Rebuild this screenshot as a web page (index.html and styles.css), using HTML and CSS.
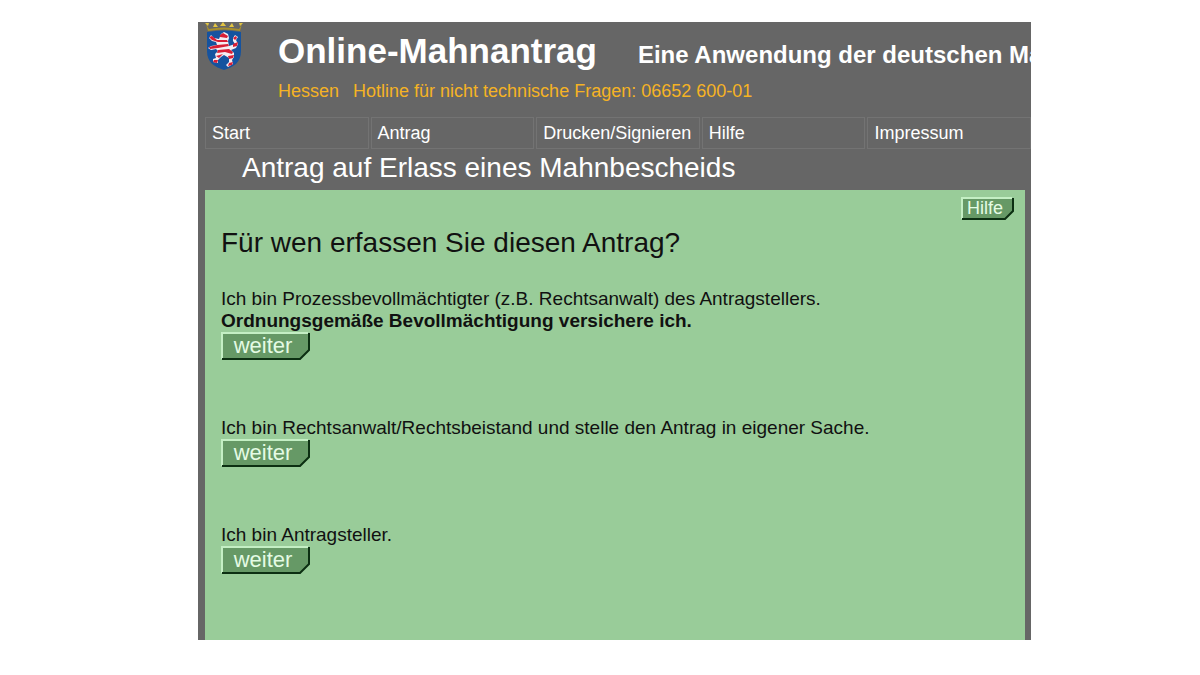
FILE: index.html
```html
<!DOCTYPE html>
<html lang="de">
<head>
  <meta charset="UTF-8">
  <title>Online-Mahnantrag</title>
  <link rel="stylesheet" href="styles.css">
</head>
<body>

<div class="window">
  <header class="kopf">
    <svg class="wappen" viewBox="0 0 38 48" role="img" aria-label="Landeswappen Hessen">
      <path d="M1 2 L4 7 Q19 4 34 7 L37 2 L35 9 Q19 6 3 9 Z" fill="#a8902c"/>
      <path d="M8 5 L10 1 L13 5 Z M15 4 L18 0 L21 4 Z M24 5 L27 1 L29 5 Z M0 1 H4 L3 4 Z M34 1 H38 L35 4 Z" fill="#e3c541"/>
      <path d="M2 10 Q19 7 36 10 V29 C36 41 28 45 19 48 C10 45 2 41 2 29 Z" fill="#15539f"/>
      <!-- Löwe -->
      <path d="M16 12 L19 10 L23 12 L24 16 L23 19 L24 24 L27 23 L30 22 L28 19 L28 16 L30 13 L33 15 L31 18 L33 22 L31 26 L26 28 L29 31 L29 35 L27 38 L28 42 L23 45 L21 43 L24 40 L24 36 L19 33 L16 35 L13 38 L13 41 L8 40 L8 37 L11 36 L10 32 L13 29 L11 27 L6 28 L3 26 L6 24 L12 23 L11 20 L7 19 L4 16 L6 13 L9 16 L14 17 Z" fill="#f4edf2"/>
      <path d="M15 13 L18 11 L23 14 L22 16 L15 15 Z M4 15 L7 14 L12 18 L22 18 L23 20 L13 20 L7 18 Z M4 25 L12 23 L23 22 L24 24 L13 26 L5 27 Z M13 28 L24 27 L28 30 L27 32 L20 30 L12 31 Z M11 34 L18 32 L14 36 Z M9 38 L13 38 L12 41 L8 40 Z M23 34 L29 33 L28 36 L24 37 Z M24 41 L28 40 L27 43 L23 44 Z M28 22 L33 20 L32 24 L28 25 Z M28 16 L31 14 L32 16 L30 18 Z" fill="#d81e35"/>
    </svg>
    <div class="titel">
      <div class="titel-zeile">
        <h1>Online-Mahnantrag</h1>
        <span class="untertitel">Eine Anwendung der deutschen Mahngerichte</span>
      </div>
      <p class="hotline"><span>Hessen</span><span>Hotline für nicht technische Fragen: 06652 600-01</span></p>
    </div>
  </header>

  <nav class="menu">
    <a href="#">Start</a>
    <a href="#">Antrag</a>
    <a href="#">Drucken/Signieren</a>
    <a href="#">Hilfe</a>
    <a href="#">Impressum</a>
  </nav>

  <h2 class="seitentitel">Antrag auf Erlass eines Mahnbescheids</h2>

  <main class="inhalt">
    <div class="hilfe-zeile">
      <button type="button" class="btn btn-hilfe">
        <svg viewBox="0 0 53 23" aria-hidden="true">
          <path d="M1 1 H52 V14 L44 22 H1 Z" fill="#669966"/>
          <path d="M1 22 V1 H51" fill="none" stroke="#c4efc4" stroke-width="2"/>
          <path d="M52 1 V14 L44 22 H1" fill="none" stroke="#0c2f12" stroke-width="2"/>
        </svg>
        <span>Hilfe</span>
      </button>
    </div>

    <h3>Für wen erfassen Sie diesen Antrag?</h3>

    <section class="auswahl">
      <p>Ich bin Prozessbevollmächtigter (z.B. Rechtsanwalt) des Antragstellers.<br>
      <strong>Ordnungsgemäße Bevollmächtigung versichere ich.</strong></p>
      <button type="button" class="btn">
        <svg viewBox="0 0 89 28" aria-hidden="true">
          <path d="M1 1 H88 V18 L79 27 H1 Z" fill="#669966"/>
          <path d="M1 27 V1 H87" fill="none" stroke="#c4efc4" stroke-width="2"/>
          <path d="M88 1 V18 L79 27 H1" fill="none" stroke="#0c2f12" stroke-width="2"/>
        </svg>
        <span>weiter</span>
      </button>
    </section>

    <section class="auswahl">
      <p>Ich bin Rechtsanwalt/Rechtsbeistand und stelle den Antrag in eigener Sache.</p>
      <button type="button" class="btn">
        <svg viewBox="0 0 89 28" aria-hidden="true">
          <path d="M1 1 H88 V18 L79 27 H1 Z" fill="#669966"/>
          <path d="M1 27 V1 H87" fill="none" stroke="#c4efc4" stroke-width="2"/>
          <path d="M88 1 V18 L79 27 H1" fill="none" stroke="#0c2f12" stroke-width="2"/>
        </svg>
        <span>weiter</span>
      </button>
    </section>

    <section class="auswahl">
      <p>Ich bin Antragsteller.</p>
      <button type="button" class="btn">
        <svg viewBox="0 0 89 28" aria-hidden="true">
          <path d="M1 1 H88 V18 L79 27 H1 Z" fill="#669966"/>
          <path d="M1 27 V1 H87" fill="none" stroke="#c4efc4" stroke-width="2"/>
          <path d="M88 1 V18 L79 27 H1" fill="none" stroke="#0c2f12" stroke-width="2"/>
        </svg>
        <span>weiter</span>
      </button>
    </section>
  </main>
</div>

</body>
</html>
```
FILE: styles.css
```css
* {
  box-sizing: border-box;
}
body {
  margin: 0;
  padding: 22px 169px 35px 198px;
  min-height: 100vh;
  display: flex;
  background-color: #fff;
  color: #111;
  font-family: "Liberation Sans", Arial, sans-serif;
  font-size: 19px;
  line-height: 22px;
}
h1, h2, h3, p {
  margin: 0;
}
.window {
  flex: 1;
  min-width: 0;
  display: flex;
  flex-direction: column;
  padding-left: 7px;
  background-color: #666;
  overflow: hidden;
}

/* Kopfbereich */
.kopf {
  display: flex;
  gap: 35px;
  height: 95px;
  color: #fff;
}
.wappen {
  flex: none;
  width: 38px;
  height: 48px;
}
.titel-zeile {
  display: flex;
  align-items: baseline;
  gap: 41px;
  padding-top: 8px;
  white-space: nowrap;
}
h1 {
  font-size: 35px;
  line-height: 42px;
}
.untertitel {
  font-size: 24px;
  font-weight: bold;
}
.hotline {
  display: flex;
  gap: 14px;
  padding-top: 8px;
  color: #f5b324;
  font-size: 18px;
}

/* Menü */
.menu {
  display: grid;
  grid-template-columns: repeat(5, 1fr);
  gap: 2px;
}
.menu a {
  padding: 4px 6px;
  border: 1px solid #737373;
  color: #fff;
  font-size: 18px;
  text-decoration: none;
  white-space: nowrap;
}
.seitentitel {
  padding: 0 37px 3px;
  color: #fff;
  font-size: 28px;
  font-weight: normal;
  line-height: 38px;
}

/* Inhalt */
.inhalt {
  flex: 1;
  margin-right: 6px;
  padding: 7px 16px;
  background-color: #9c9;
}
.hilfe-zeile {
  display: flex;
  justify-content: flex-end;
  margin-right: -5px;
}
h3 {
  padding-top: 2px;
  margin-bottom: 24px;
  font-size: 28px;
  font-weight: normal;
  line-height: 42px;
}
.auswahl {
  margin-bottom: 57px;
}
.btn {
  position: relative;
  display: block;
  width: 89px;
  height: 28px;
  padding: 0 5px 0 0;
  border: none;
  background: none;
  color: #e4fbe4;
  font-family: inherit;
  font-size: 22px;
  line-height: 28px;
  cursor: pointer;
}
.btn svg {
  position: absolute;
  inset: 0;
  width: 100%;
  height: 100%;
}
.btn span {
  position: relative;
}
.btn-hilfe {
  width: 53px;
  height: 23px;
  font-size: 18px;
  line-height: 23px;
}
```
